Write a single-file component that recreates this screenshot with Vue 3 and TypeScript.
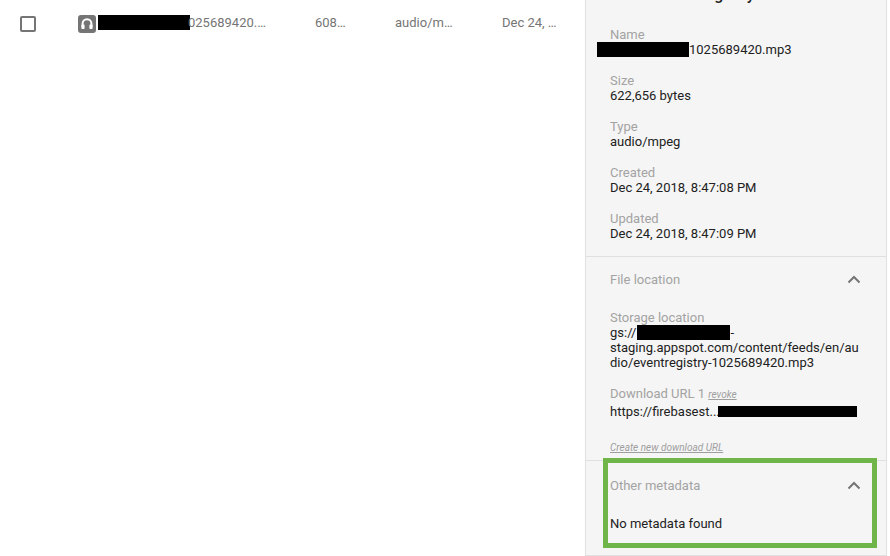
<script setup lang="ts">
interface Field {
  label: string
  value: string
}
const basics: Field[] = [
  { label: 'Size', value: '622,656 bytes' },
  { label: 'Type', value: 'audio/mpeg' },
  { label: 'Created', value: 'Dec 24, 2018, 8:47:08 PM' },
  { label: 'Updated', value: 'Dec 24, 2018, 8:47:09 PM' },
]
</script>

<template>
  <div class="page">
    <main class="list">
      <div class="row">
        <span class="check"></span>
        <span class="file-icon">
          <svg width="18" height="18" viewBox="0 0 18 18">
            <rect width="18" height="18" rx="3" fill="#757575" />
            <path d="M4.6 12V8.6a4.4 4.4 0 0 1 8.8 0V12" fill="none" stroke="#fff" stroke-width="2" />
            <rect x="3.4" y="9.6" width="3.2" height="4.4" rx=".8" fill="#fff" />
            <rect x="11.4" y="9.6" width="3.2" height="4.4" rx=".8" fill="#fff" />
          </svg>
        </span>
        <span class="cell name"><span class="redact name-redact"></span>025689420.…</span>
        <span class="cell size">608…</span>
        <span class="cell type">audio/m…</span>
        <span class="cell date">Dec 24, …</span>
      </div>
    </main>
    <aside class="panel">
      <div class="title"><span>eventregistry</span></div>
      <section class="section first">
        <div class="field name-field">
          <div class="label">Name</div>
          <div class="value"><span class="redact panel-name-redact"></span>1025689420.mp3</div>
        </div>
        <div v-for="f in basics" :key="f.label" class="field">
          <div class="label">{{ f.label }}</div>
          <div class="value">{{ f.value }}</div>
        </div>
      </section>
      <section class="section location">
        <div class="head">
          <span>File location</span>
          <svg class="chev" width="14" height="9" viewBox="0 0 14 9"><path d="M1.5 7.5 7 2l5.5 5.5" fill="none" stroke="#757575" stroke-width="2" /></svg>
        </div>
        <div class="field">
          <div class="label">Storage location</div>
          <div class="value">gs://<span class="redact storage-redact"></span>-<br />staging.appspot.com/content/feeds/en/au<br />dio/eventregistry-1025689420.mp3</div>
        </div>
        <div class="field url">
          <div class="label">Download URL 1 <a class="revoke">revoke</a></div>
          <div class="value">https://firebasest...<span class="redact url-redact"></span></div>
        </div>
        <a class="create">Create new download URL</a>
      </section>
      <section class="section other">
        <div class="head">
          <span>Other metadata</span>
          <svg class="chev" width="14" height="9" viewBox="0 0 14 9"><path d="M1.5 7.5 7 2l5.5 5.5" fill="none" stroke="#757575" stroke-width="2" /></svg>
        </div>
        <div class="value none">No metadata found</div>
        <div class="highlight"></div>
      </section>
    </aside>
  </div>
</template>

<style>
html, body { margin: 0; background: #fff; }
</style>

<style scoped>
.page {
  width: 890px;
  height: 556px;
  display: flex;
  overflow: hidden;
  background: #fff;
  font-family: Roboto, "Liberation Sans", sans-serif;
  font-size: 13px;
  line-height: 15px;
}
.list { width: 585px; flex: none; }
.row {
  display: flex;
  align-items: center;
  height: 47px;
  color: #757575;
}
.check {
  width: 12px;
  height: 12px;
  margin-left: 20px;
  border: 2px solid #757575;
  border-radius: 2px;
  flex: none;
}
.file-icon { display: flex; margin-left: 42px; flex: none; }
.cell { white-space: nowrap; position: relative; top: -1px; }
.name { width: 219px; padding-left: 2px; box-sizing: border-box; display: flex; align-items: center; }
.size { width: 80px; }
.type { width: 107px; }
.redact { display: inline-block; background: #000; vertical-align: top; }
.name-redact { width: 92px; height: 15px; margin-right: -2px; }
.panel {
  width: 302px;
  height: 556px;
  flex: none;
  box-sizing: border-box;
  background: #f5f5f5;
  border-left: 1px solid #e0e0e0;
  border-right: 1px solid #e0e0e0;
  border-bottom: 1px solid #e0e0e0;
  color: #212121;
  display: flex;
  flex-direction: column;
}
.title {
  height: 3px;
  overflow: hidden;
  font-size: 16px;
  line-height: 16px;
  font-weight: 500;
  color: #212121;
  padding-left: 75px;
  flex: none;
}
.title span { display: block; margin-top: -13px; }
.section { padding: 0 24px; border-bottom: 1px solid #e0e0e0; }
.first { height: 254px; box-sizing: border-box; padding-top: 24px; flex: none; }
.field { margin-bottom: 16px; }
.label { color: #a3a3a3; }
.value { color: #212121; }
.name-field .value { margin-left: -13px; }
.panel-name-redact { width: 92px; height: 15px; }
.location { height: 204px; box-sizing: border-box; flex: none; }
.head {
  display: flex;
  justify-content: space-between;
  align-items: center;
  height: 44px;
  color: #a3a3a3;
}
.chev { margin-right: 1px; }
.location .head { margin-bottom: 9px; }
.storage-redact { width: 93px; height: 15px; margin-left: 1px; }
.url .value { margin-top: 2px; }
.revoke, .create {
  font-style: italic;
  font-size: 10px;
  color: #9e9e9e;
  text-decoration: underline;
}
.create { display: block; margin-top: 21px; }
.url-redact { width: 139px; height: 11px; margin-left: -2px; margin-top: 2px; }
.other { border-bottom: 0; flex: 1; position: relative; }
.other .head { height: 48px; }
.none { margin-top: 7px; }
.highlight {
  position: absolute;
  left: 17px;
  top: -3px;
  width: 264px;
  height: 80px;
  border: 5px solid #6fb54a;
  pointer-events: none;
}
</style>
